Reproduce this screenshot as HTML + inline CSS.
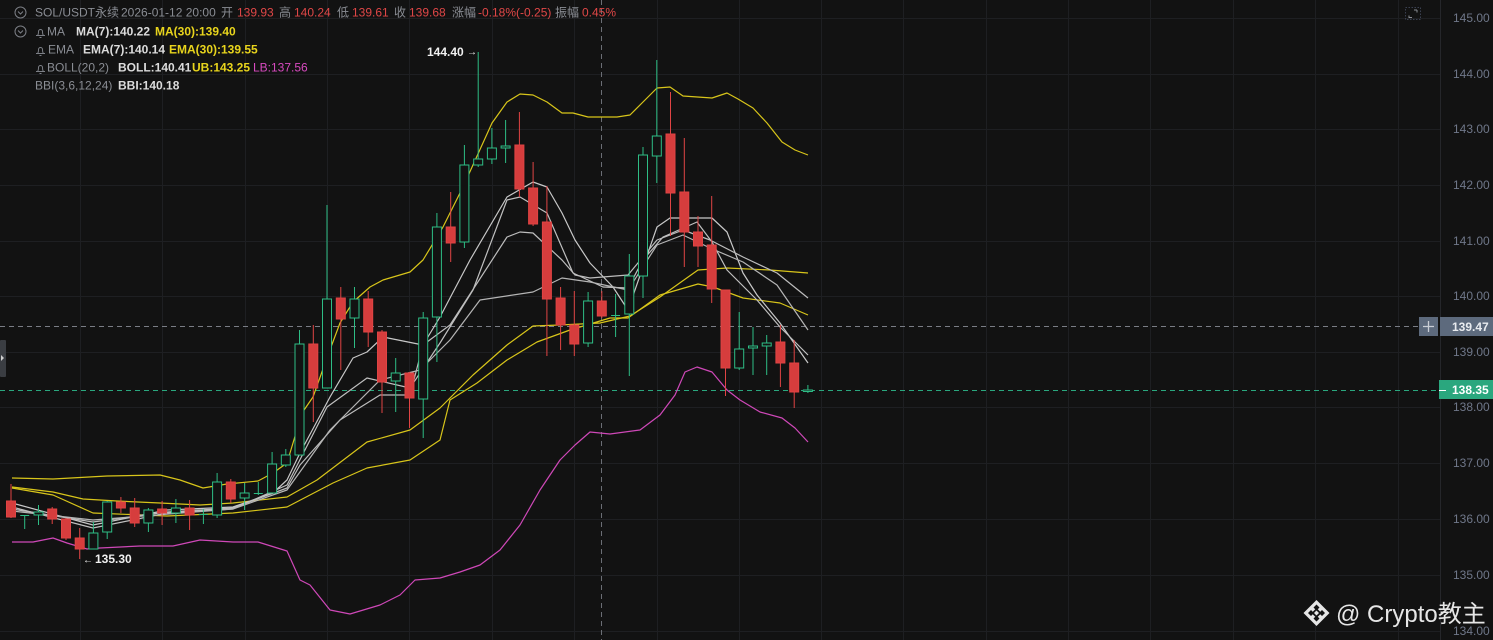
<!DOCTYPE html>
<html><head><meta charset="utf-8"><style>
html,body{margin:0;padding:0;background:#121212;width:1493px;height:640px;overflow:hidden}
svg{display:block}
text{font-family:"Liberation Sans","Noto Sans CJK SC",sans-serif}
</style></head><body>
<svg width="1493" height="640" viewBox="0 0 1493 640" xmlns="http://www.w3.org/2000/svg">
<rect width="1493" height="640" fill="#121212"/>
<g stroke="#1e1f22" stroke-width="1">
<line x1="0" y1="18.5" x2="1440" y2="18.5"/><line x1="0" y1="74.5" x2="1440" y2="74.5"/><line x1="0" y1="129.5" x2="1440" y2="129.5"/><line x1="0" y1="185.5" x2="1440" y2="185.5"/><line x1="0" y1="241.5" x2="1440" y2="241.5"/><line x1="0" y1="296.5" x2="1440" y2="296.5"/><line x1="0" y1="352.5" x2="1440" y2="352.5"/><line x1="0" y1="407.5" x2="1440" y2="407.5"/><line x1="0" y1="463.5" x2="1440" y2="463.5"/><line x1="0" y1="519.5" x2="1440" y2="519.5"/><line x1="0" y1="575.5" x2="1440" y2="575.5"/><line x1="0" y1="631.5" x2="1440" y2="631.5"/>
<line x1="80.5" y1="0" x2="80.5" y2="640"/><line x1="162.5" y1="0" x2="162.5" y2="640"/><line x1="245.5" y1="0" x2="245.5" y2="640"/><line x1="327.5" y1="0" x2="327.5" y2="640"/><line x1="409.5" y1="0" x2="409.5" y2="640"/><line x1="492.5" y1="0" x2="492.5" y2="640"/><line x1="574.5" y1="0" x2="574.5" y2="640"/><line x1="657.5" y1="0" x2="657.5" y2="640"/><line x1="739.5" y1="0" x2="739.5" y2="640"/><line x1="821.5" y1="0" x2="821.5" y2="640"/><line x1="903.5" y1="0" x2="903.5" y2="640"/><line x1="986.5" y1="0" x2="986.5" y2="640"/><line x1="1068.5" y1="0" x2="1068.5" y2="640"/><line x1="1150.5" y1="0" x2="1150.5" y2="640"/><line x1="1233.5" y1="0" x2="1233.5" y2="640"/><line x1="1315.5" y1="0" x2="1315.5" y2="640"/><line x1="1398.5" y1="0" x2="1398.5" y2="640"/>
</g>
<line x1="1440.5" y1="0" x2="1440.5" y2="640" stroke="#25262a"/>
<line x1="601.5" y1="0" x2="601.5" y2="640" stroke="#6b6e75" stroke-dasharray="5,4"/>
<line x1="0" y1="326.5" x2="1419" y2="326.5" stroke="#7a7d85" stroke-dasharray="5,4"/>
<line x1="0" y1="390.5" x2="1440" y2="390.5" stroke="#2aa77e" stroke-dasharray="5,4"/>

<g fill="none" stroke-width="1.2" stroke-linejoin="round">
<polyline stroke="#d8c51a" points="12,478 53,479 107,476 160,475 180,480 203,488 227,484 258,481 273,473 287,463 293,443 302,413 313,397 328,355 340,323 353,302 370,287 383,280 410,272 423,260 443,227 463,187 492,123 507,102 520,94 533,95 547,102 562,113 573,113 588,117 617,117 630,115 643,102 657,88 670,87 683,96 712,98 727,93 738,99 753,108 767,123 782,142 795,150 808,155"/>
<polyline stroke="#cf48b8" points="12,542 33,542 53,538 67,543 87,549 100,548 140,546 173,546 200,540 233,542 258,542 287,551 300,580 310,585 330,610 350,614 380,605 400,595 415,580 440,578 460,572 480,565 500,550 520,525 540,490 560,460 575,445 590,432 610,434 640,430 660,415 675,395 685,372 697,367 712,372 727,390 740,400 760,412 782,418 795,428 808,442"/>
<polyline stroke="#d8c51a" points="12,487 53,492 83,499 117,501 160,503 200,505 233,503 287,497 317,480 367,442 410,430 440,408 473,375 507,345 533,326 560,325 600,323 630,316 660,297 698,270 727,268 770,270 808,273"/>
<polyline stroke="#d8c51a" points="12,488 53,495 93,513 167,516 233,513 287,507 333,483 367,468 410,460 440,440 450,400 477,383 507,360 537,342 570,330 610,318 628,318 660,295 698,284 713,287 743,298 780,303 808,315"/>
<polyline stroke="#c8c8c8" points="12,503 93,525 167,510 233,507 273,493 287,480 300,453 330,397 353,358 367,352 383,337 423,345 440,317 470,260 507,197 533,182 547,187 562,213 575,240 590,263 613,287 628,310 657,227 670,218 712,218 727,232 743,273 757,295 780,323 808,363"/>
<polyline stroke="#c0c0c0" points="12,507 93,528 167,513 233,509 287,485 327,407 367,378 410,388 440,343 473,290 507,200 520,197 547,213 573,273 603,287 628,288 643,260 663,237 697,222 712,242 727,270 757,300 780,327 808,355"/>
<polyline stroke="#bdbdbd" points="12,509 93,522 167,512 233,508 287,488 300,465 340,420 380,395 410,395 423,345 450,325 507,237 520,232 533,233 562,260 575,275 590,278 628,275 657,240 683,230 710,240 743,257 777,273 808,298"/>
<polyline stroke="#b5b5b5" points="12,511 93,520 233,509 287,490 330,430 380,380 420,370 450,340 480,300 533,292 562,278 590,282 628,290 657,245 683,235 710,248 743,262 777,285 808,330"/>
</g>

<g stroke-width="1">
<g stroke="#e04444" fill="#d63d3d">
<line x1="11" y1="484" x2="11" y2="518"/><rect x="6.5" y="501" width="9" height="16"/>
<line x1="52.2" y1="507" x2="52.2" y2="524"/><rect x="47.7" y="509" width="9" height="10"/>
<line x1="66" y1="518" x2="66" y2="540"/><rect x="61.5" y="519" width="9" height="19"/>
<line x1="79.7" y1="528" x2="79.7" y2="559"/><rect x="75.2" y="538" width="9" height="11"/>
<line x1="120.9" y1="497" x2="120.9" y2="513"/><rect x="116.4" y="502" width="9" height="6"/>
<line x1="134.7" y1="498" x2="134.7" y2="527"/><rect x="130.2" y="508" width="9" height="15"/>
<line x1="162.1" y1="501" x2="162.1" y2="525"/><rect x="157.6" y="509" width="9" height="4"/>
<line x1="189.6" y1="500" x2="189.6" y2="530"/><rect x="185.1" y="508" width="9" height="7"/>
<line x1="230.8" y1="479" x2="230.8" y2="503"/><rect x="226.3" y="482" width="9" height="17"/>
<line x1="313.3" y1="325" x2="313.3" y2="422"/><rect x="308.8" y="344" width="9" height="44"/>
<line x1="340.8" y1="287" x2="340.8" y2="370"/><rect x="336.3" y="298" width="9" height="21"/>
<line x1="368.2" y1="291" x2="368.2" y2="347"/><rect x="363.7" y="299" width="9" height="33"/>
<line x1="382" y1="330" x2="382" y2="413"/><rect x="377.5" y="332" width="9" height="50"/>
<line x1="409.5" y1="372" x2="409.5" y2="428"/><rect x="405" y="373" width="9" height="25"/>
<line x1="450.7" y1="192" x2="450.7" y2="262"/><rect x="446.2" y="227" width="9" height="16"/>
<line x1="519.4" y1="112" x2="519.4" y2="197"/><rect x="514.9" y="145" width="9" height="44"/>
<line x1="533.1" y1="162" x2="533.1" y2="226"/><rect x="528.6" y="188" width="9" height="36"/>
<line x1="546.9" y1="186" x2="546.9" y2="356"/><rect x="542.4" y="222" width="9" height="77"/>
<line x1="560.6" y1="287" x2="560.6" y2="350"/><rect x="556.1" y="298" width="9" height="27"/>
<line x1="574.3" y1="291" x2="574.3" y2="356"/><rect x="569.8" y="325" width="9" height="19"/>
<line x1="601.8" y1="291" x2="601.8" y2="318"/><rect x="597.3" y="301" width="9" height="15"/>
<line x1="670.5" y1="92" x2="670.5" y2="236"/><rect x="666" y="134" width="9" height="59"/>
<line x1="684.3" y1="138" x2="684.3" y2="267"/><rect x="679.8" y="192" width="9" height="40"/>
<line x1="698" y1="216" x2="698" y2="267"/><rect x="693.5" y="232" width="9" height="14"/>
<line x1="711.7" y1="196" x2="711.7" y2="303"/><rect x="707.2" y="245" width="9" height="44"/>
<line x1="725.5" y1="290" x2="725.5" y2="396"/><rect x="721" y="290" width="9" height="78"/>
<line x1="780.4" y1="325" x2="780.4" y2="387"/><rect x="775.9" y="342" width="9" height="21"/>
<line x1="794.2" y1="340" x2="794.2" y2="408"/><rect x="789.7" y="363" width="9" height="29"/>
</g>
<g stroke="#2ebd85" fill="#121212">
<line x1="24.7" y1="515" x2="24.7" y2="529"/><line x1="20.2" y1="515.5" x2="29.2" y2="515.5"/>
<line x1="38.5" y1="505" x2="38.5" y2="525"/><rect x="34" y="512" width="9" height="3"/>
<line x1="93.4" y1="522" x2="93.4" y2="549"/><rect x="88.9" y="533" width="9" height="16"/>
<line x1="107.2" y1="501" x2="107.2" y2="539"/><rect x="102.7" y="502" width="9" height="30"/>
<line x1="148.4" y1="508" x2="148.4" y2="532"/><rect x="143.9" y="510" width="9" height="13"/>
<line x1="175.9" y1="499" x2="175.9" y2="523"/><rect x="171.4" y="508" width="9" height="5"/>
<line x1="203.4" y1="509" x2="203.4" y2="524"/><line x1="198.9" y1="514.5" x2="207.9" y2="514.5"/>
<line x1="217.1" y1="473" x2="217.1" y2="518"/><rect x="212.6" y="482" width="9" height="33"/>
<line x1="244.6" y1="483" x2="244.6" y2="510"/><rect x="240.1" y="493" width="9" height="5"/>
<line x1="258.3" y1="482" x2="258.3" y2="495"/><line x1="253.8" y1="493.5" x2="262.8" y2="493.5"/>
<line x1="272.1" y1="452" x2="272.1" y2="493"/><rect x="267.6" y="464" width="9" height="29"/>
<line x1="285.8" y1="449" x2="285.8" y2="467"/><rect x="281.3" y="455" width="9" height="10"/>
<line x1="299.5" y1="330" x2="299.5" y2="455"/><rect x="295" y="344" width="9" height="111"/>
<line x1="327" y1="205" x2="327" y2="388"/><rect x="322.5" y="299" width="9" height="89"/>
<line x1="354.5" y1="287" x2="354.5" y2="348"/><rect x="350" y="299" width="9" height="19"/>
<line x1="395.7" y1="358" x2="395.7" y2="412"/><rect x="391.2" y="373" width="9" height="8"/>
<line x1="423.2" y1="312" x2="423.2" y2="438"/><rect x="418.7" y="318" width="9" height="81"/>
<line x1="436.9" y1="213" x2="436.9" y2="362"/><rect x="432.4" y="227" width="9" height="90"/>
<line x1="464.4" y1="145" x2="464.4" y2="248"/><rect x="459.9" y="165" width="9" height="77"/>
<line x1="478.2" y1="52" x2="478.2" y2="167"/><rect x="473.7" y="159" width="9" height="6"/>
<line x1="491.9" y1="128" x2="491.9" y2="164"/><rect x="487.4" y="148" width="9" height="11"/>
<line x1="505.6" y1="120" x2="505.6" y2="163"/><rect x="501.1" y="146" width="9" height="2"/>
<line x1="588.1" y1="292" x2="588.1" y2="347"/><rect x="583.6" y="301" width="9" height="42"/>
<line x1="615.6" y1="294" x2="615.6" y2="337"/><line x1="611.1" y1="315.5" x2="620.1" y2="315.5"/>
<line x1="629.3" y1="254" x2="629.3" y2="376"/><rect x="624.8" y="276" width="9" height="38"/>
<line x1="643" y1="147" x2="643" y2="298"/><rect x="638.5" y="155" width="9" height="121"/>
<line x1="656.8" y1="60" x2="656.8" y2="183"/><rect x="652.3" y="136" width="9" height="20"/>
<line x1="739.2" y1="312" x2="739.2" y2="370"/><rect x="734.7" y="349" width="9" height="19"/>
<line x1="753" y1="327" x2="753" y2="375"/><rect x="748.5" y="346" width="9" height="2"/>
<line x1="766.7" y1="335" x2="766.7" y2="375"/><rect x="762.2" y="343" width="9" height="3"/>
<line x1="807.9" y1="385" x2="807.9" y2="393"/><rect x="803.4" y="390" width="9" height="1.5"/>
</g>
</g>

<text x="427" y="56" font-size="12" font-weight="bold" fill="#f0f0f0">144.40</text><text x="467" y="55" font-size="10" fill="#f0f0f0">→</text>
<text x="83" y="563" font-size="10" fill="#f0f0f0">←</text><text x="95" y="563" font-size="12" font-weight="bold" fill="#f0f0f0">135.30</text>

<g font-size="12">
<circle cx="20.5" cy="12.5" r="5.5" fill="none" stroke="#7c7f86"/><path d="M18 11.5l2.5 2.5 2.5-2.5" fill="none" stroke="#7c7f86"/>
<text y="16.5" fill="#8a8d94"><tspan x="35">SOL/USDT永续</tspan><tspan x="121">2026-01-12 20:00</tspan><tspan x="221">开</tspan><tspan x="237" fill="#e04747">139.93</tspan><tspan x="279">高</tspan><tspan x="294" fill="#e04747">140.24</tspan><tspan x="337">低</tspan><tspan x="352" fill="#e04747">139.61</tspan><tspan x="394">收</tspan><tspan x="409" fill="#e04747">139.68</tspan><tspan x="452">涨幅</tspan><tspan x="478" fill="#e04747">-0.18%(-0.25)</tspan><tspan x="555">振幅</tspan><tspan x="582" fill="#e04747">0.45%</tspan></text>
<circle cx="20.5" cy="31.5" r="5.5" fill="none" stroke="#7c7f86"/><path d="M18 30.5l2.5 2.5 2.5-2.5" fill="none" stroke="#7c7f86"/>
<g fill="none" stroke="#7c7f86">
<path d="M36 35.5h9M37.5 35.5c1-1 1-2 1-4a2 2 0 0 1 4 0c0 2 0 3 1 4M39.5 37.5h2"/>
<path d="M36 53.5h9M37.5 53.5c1-1 1-2 1-4a2 2 0 0 1 4 0c0 2 0 3 1 4M39.5 55.5h2"/>
<path d="M36 71.5h9M37.5 71.5c1-1 1-2 1-4a2 2 0 0 1 4 0c0 2 0 3 1 4M39.5 73.5h2"/>
</g>
<text x="47" y="35.5" fill="#8a8d94">MA</text>
<text x="76" y="35.5" fill="#dcdcdc" font-weight="bold">MA(7):140.22</text><text x="155" y="35.5" fill="#e8d41c" font-weight="bold">MA(30):139.40</text>
<text x="48" y="53.5" fill="#8a8d94">EMA</text>
<text x="83" y="53.5" fill="#dcdcdc" font-weight="bold">EMA(7):140.14</text><text x="169" y="53.5" fill="#e8d41c" font-weight="bold">EMA(30):139.55</text>
<text x="47" y="71.5" fill="#8a8d94">BOLL(20,2)</text>
<text x="118" y="71.5" fill="#dcdcdc" font-weight="bold">BOLL:140.41</text><text x="192" y="71.5" fill="#e8d41c" font-weight="bold">UB:143.25</text><text x="253" y="71.5" fill="#d84ac0">LB:137.56</text>
<text x="35" y="89.5" fill="#8a8d94">BBI(3,6,12,24)</text><text x="118" y="89.5" fill="#dcdcdc" font-weight="bold">BBI:140.18</text>
</g>

<rect x="1405.5" y="7.5" width="15" height="12" fill="none" stroke="#3a4050" stroke-dasharray="1.5,1.5"/>
<path d="M1409 15.5v2h3M1417 10h-3M1417 10v2.5" fill="none" stroke="#8a8d94"/>

<rect x="0" y="340" width="6" height="37" rx="1" fill="#3a3d42"/><path d="M1 355l3 3-3 3z" fill="#d0d0d0"/>

<g font-size="12" fill="#6f7789">
<text x="1453" y="22">145.00</text><text x="1453" y="78">144.00</text><text x="1453" y="133">143.00</text><text x="1453" y="189">142.00</text><text x="1453" y="245">141.00</text><text x="1453" y="300">140.00</text><text x="1453" y="356">139.00</text><text x="1453" y="411">138.00</text><text x="1453" y="467">137.00</text><text x="1453" y="523">136.00</text><text x="1453" y="579">135.00</text><text x="1453" y="635">134.00</text>
</g>
<rect x="1419" y="317" width="19" height="19" fill="#5d6a7d"/><path d="M1423 326.5h11M1428.5 321v11" stroke="#c9ced6" stroke-width="1.3"/>
<rect x="1440" y="317" width="53" height="19" fill="#5d6a7d"/><text x="1452" y="331" font-size="12" font-weight="bold" fill="#e8ebef">139.47</text>
<rect x="1439" y="380" width="54" height="19" fill="#2aa77e"/><line x1="1439" y1="390.5" x2="1446" y2="390.5" stroke="#fff"/><text x="1452" y="394" font-size="12" font-weight="bold" fill="#ffffff">138.35</text>

<g fill="#e6e6e6">
<path fill-rule="evenodd" d="M1316.5 600l13 13-13 13-13-13z M1316.5 608l5 5-5 5-5-5z"/>
<path d="M1316.5 604.5l3 3-3 3-3-3z M1316.5 615.5l3 3-3 3-3-3z M1308 613l3-3 3 3-3 3z M1319 613l3-3 3 3-3 3z" fill="#121212"/>
<path d="M1316.5 610.5l2.5 2.5-2.5 2.5-2.5-2.5z"/>
<text x="1336" y="622" font-size="24" fill="#e6e6e6">@ Crypto教主</text>
</g>
</svg>
</body></html>
